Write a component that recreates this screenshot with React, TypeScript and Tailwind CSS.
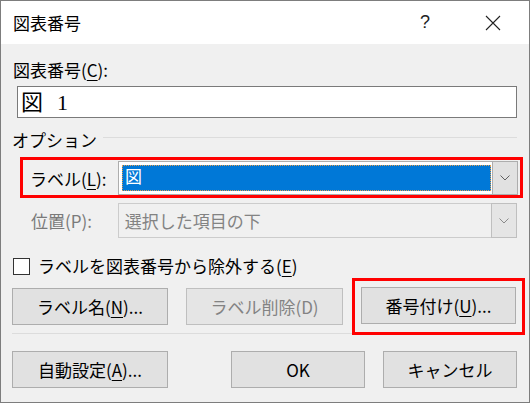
import React from "react";

const Chevron: React.FC<{ color?: string }> = ({ color = "#606060" }) => (
	<svg width="10" height="6" viewBox="0 0 10 6" fill="none">
		<polyline points="0.5,0.5 5,5 9.5,0.5" stroke={color} strokeWidth="1" />
	</svg>
);

const U: React.FC<{ children: React.ReactNode }> = ({ children }) => (
	<span className="underline underline-offset-[3px] decoration-1">{children}</span>
);

const Btn: React.FC<{ children: React.ReactNode; disabled?: boolean; className?: string }> = ({
	children,
	disabled,
	className = "w-[156px]",
}) => (
	<div
		className={
			"flex h-[37px] items-center justify-center border text-[17px] " +
			className +
			(disabled ? " border-[#bfbfbf] bg-[#e5e5e5] text-[#838383]" : " border-[#adadad] bg-[#e1e1e1] text-black")
		}
	>
		{children}
	</div>
);

const App: React.FC = () => {
	return (
		<div className="h-[403px] w-[530px] overflow-hidden border border-[#7d7d7d] bg-[#f0f0f0] font-['Noto_Sans_CJK_JP',sans-serif] text-black">
			{/* title bar */}
			<div className="flex h-[43px] items-center bg-white">
				<span className="pl-[12px] text-[17px]">図表番号</span>
				<div className="ml-auto flex w-[46px] justify-center font-['Liberation_Sans',sans-serif] text-[18px] text-[#222]">?</div>
				<div className="ml-[22px] mr-[13px] flex w-[46px] justify-center">
					<svg width="16" height="16" viewBox="0 0 16 16">
						<path d="M1 1 L15 15 M15 1 L1 15" stroke="#222" strokeWidth="1.1" />
					</svg>
				</div>
			</div>

			<div className="pl-[11px] pr-[12px]">
				<div className="mt-[16px] h-[20px] pl-[1px] text-[17px] leading-[20px]">
					図表番号(<U>C</U>):
				</div>

				<div className="ml-[5px] mt-[6px] flex h-[32px] items-center border border-[#7a7a7a] bg-white pl-[3px] font-['Liberation_Serif','Noto_Sans_CJK_JP',serif] text-[22px]">
					<span>図</span>
					<span className="ml-[14px]">1</span>
				</div>

				<div className="mt-[12px] flex h-[20px] text-[17px] leading-[20px]">
					<span>オプション</span>
					<div className="ml-[6px] mt-[7px] h-px flex-1 bg-[#dcdcdc]"></div>
				</div>

				{/* label row (highlighted) */}
				<div className="-mr-[6px] ml-[8px] mt-[7px] flex h-[41px] border-[3px] border-[#ff0000]">
					<div className="flex w-[95px] items-center pl-[7px] pt-[3px] text-[17px]">
						ラベル(<U>L</U>):
					</div>
					<div className="mt-px flex h-[34px] w-[400px]">
						<div className="flex-1 border-y border-l border-[#adadad] bg-white py-[3px] pl-[3px] pr-px">
							<div className="flex h-full items-center border border-dotted border-[#e0a050] bg-[#0078d7] pl-[2px] font-['Liberation_Serif','Noto_Sans_CJK_JP',serif] text-[17px] text-white">
								図
							</div>
						</div>
						<div className="flex w-[26px] items-center justify-center border border-[#adadad] bg-[#e1e1e1]">
							<Chevron />
						</div>
					</div>
				</div>

				{/* position row (disabled) */}
				<div className="ml-[19px] mt-[5px] flex h-[35px]">
					<div className="flex w-[87px] items-center text-[17px] text-[#7a7a7a]">位置(P):</div>
					<div className="flex w-[400px]">
						<div className="flex flex-1 items-center border-y border-l border-[#cccccc] bg-[#f0f0f0] pl-[6px] text-[17px] text-[#838383]">
							選択した項目の下
						</div>
						<div className="flex w-[26px] items-center justify-center border border-[#bfbfbf] bg-[#e5e5e5]">
							<Chevron color="#8a8a8a" />
						</div>
					</div>
				</div>

				<div className="mt-[18px] flex h-[20px] items-center text-[17px]">
					<div className="ml-px h-[17px] w-[17px] border border-[#333] bg-white"></div>
					<span className="ml-[8px]">
						ラベルを図表番号から除外する(<U>E</U>)
					</span>
				</div>

				<div className="mt-[12px] flex gap-[18px]">
					<Btn>
						<span>
							ラベル名(<U>N</U>)...
						</span>
					</Btn>
					<Btn disabled className="w-[157px]">
						ラベル削除(D)
					</Btn>
					<div className="relative z-10 -mx-[9px] -my-[10px] border-[3px] border-[#ff0000] p-[6px]">
						<Btn className="w-[155px]">
							<span>
								番号付け(<U>U</U>)...
							</span>
						</Btn>
					</div>
				</div>

				<div className="mt-[8px] h-px bg-[#dcdcdc]"></div>

				<div className="mt-[17px] flex">
					<Btn>
						<span>
							自動設定(<U>A</U>)...
						</span>
					</Btn>
					<div className="ml-auto flex gap-[18px]">
						<Btn className="w-[134px]">OK</Btn>
						<Btn className="w-[134px]">キャンセル</Btn>
					</div>
				</div>
			</div>
		</div>
	);
};

export default App;
